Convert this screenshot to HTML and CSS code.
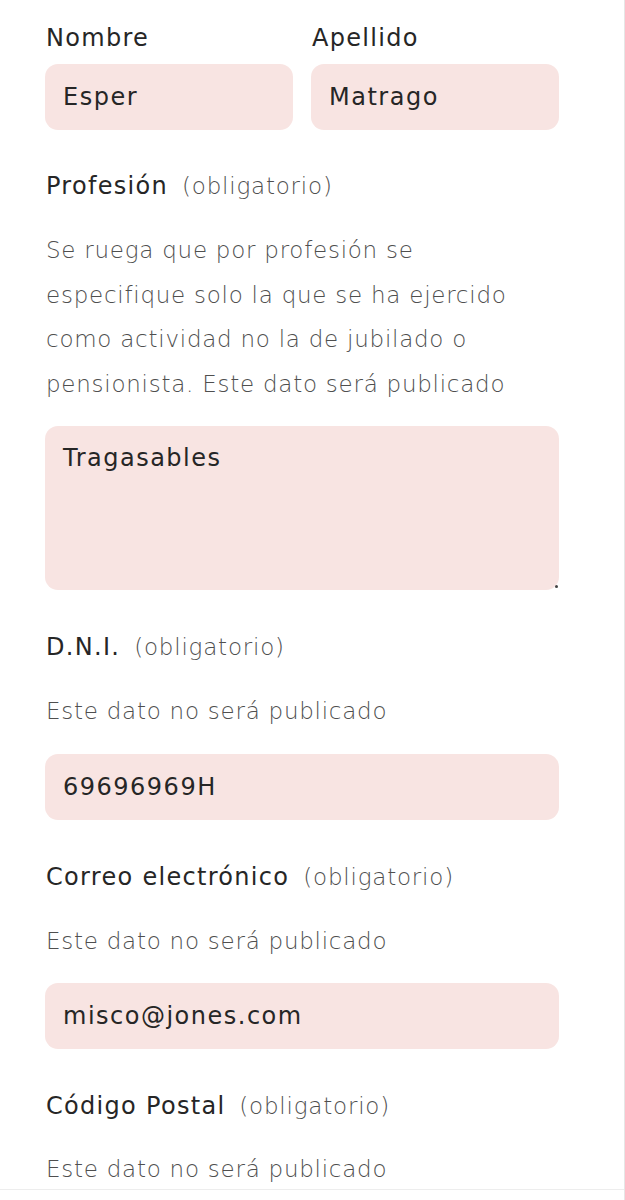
FILE: index.html
```html
<!DOCTYPE html>
<html lang="es">
<head>
<meta charset="utf-8">
<title>Formulario</title>
<link rel="stylesheet" href="styles.css">
</head>
<body>
<form class="form">
  <div class="name-row">
    <div class="name-col">
      <label class="label label-top">Nombre</label>
      <input class="field" type="text" value="Esper">
    </div>
    <div class="name-col">
      <label class="label label-top">Apellido</label>
      <input class="field" type="text" value="Matrago">
    </div>
  </div>

  <div class="group">
    <label class="label">Profesión <span class="req">(obligatorio)</span></label>
    <p class="help">Se ruega que por profesión se especifique solo la que se ha ejercido como actividad no la de jubilado o pensionista. Este dato será publicado</p>
    <div class="area-wrap">
      <textarea class="field area">Tragasables</textarea>
      <span class="grip"></span>
    </div>
  </div>

  <div class="group">
    <label class="label">D.N.I. <span class="req">(obligatorio)</span></label>
    <p class="help">Este dato no será publicado</p>
    <input class="field" type="text" value="69696969H">
  </div>

  <div class="group">
    <label class="label">Correo electrónico <span class="req">(obligatorio)</span></label>
    <p class="help">Este dato no será publicado</p>
    <input class="field" type="text" value="misco@jones.com">
  </div>

  <div class="group last">
    <label class="label">Código Postal <span class="req">(obligatorio)</span></label>
    <p class="help">Este dato no será publicado</p>
  </div>
</form>
</body>
</html>
```

FILE: styles.css
```css
html, body {
  margin: 0;
  padding: 0;
  background: #ffffff;
}
body {
  font-family: "DejaVu Sans", "Open Sans", sans-serif;
  color: #1c1c1c;
  border-right: 1px solid #e6e6e6;
  min-height: 1200px;
  box-sizing: border-box;
}
.form {
  padding: 23px 65px 0 45px;
  border-bottom: 1px solid #ededed;
}
.name-row {
  display: flex;
  gap: 18px;
  margin-bottom: 41px;
}
.name-col {
  flex: 1;
  display: flex;
  flex-direction: column;
}
.label {
  display: block;
  font-size: 24px;
  line-height: 30px;
  font-weight: 400;
  letter-spacing: 1.3px;
  color: #262626;
  margin-bottom: 27px;
  padding-left: 1px;
}
.label-top {
  margin-bottom: 11px;
}
.req {
  font-size: 23px;
  color: #4f4f4f;
  font-weight: 200;
  letter-spacing: 0.8px;
  margin-left: 5px;
}
.help {
  margin: 0 0 20px;
  font-size: 23px;
  line-height: 44.5px;
  font-weight: 200;
  letter-spacing: 0.75px;
  color: #4f4f4f;
  padding-left: 1px;
}
.field {
  display: block;
  box-sizing: border-box;
  width: 100%;
  height: 66px;
  border: none;
  outline: none;
  border-radius: 13px;
  background: #f8e4e2;
  padding: 0 18px;
  font-family: inherit;
  font-size: 24px;
  letter-spacing: 1.5px;
  color: #262626;
  margin: 0;
}
.group {
  margin-bottom: 42px;
}
.group.last {
  margin-bottom: 0;
}
.group.last .help {
  margin-top: -1px;
  margin-bottom: -3px;
}
.area-wrap {
  position: relative;
}
.area {
  height: 164px;
  resize: none;
  padding-top: 14px;
  line-height: 36px;
}
.grip {
  position: absolute;
  right: 1px;
  bottom: 2px;
  width: 3px;
  height: 3px;
  border-radius: 50%;
  background: #444;
}
```
